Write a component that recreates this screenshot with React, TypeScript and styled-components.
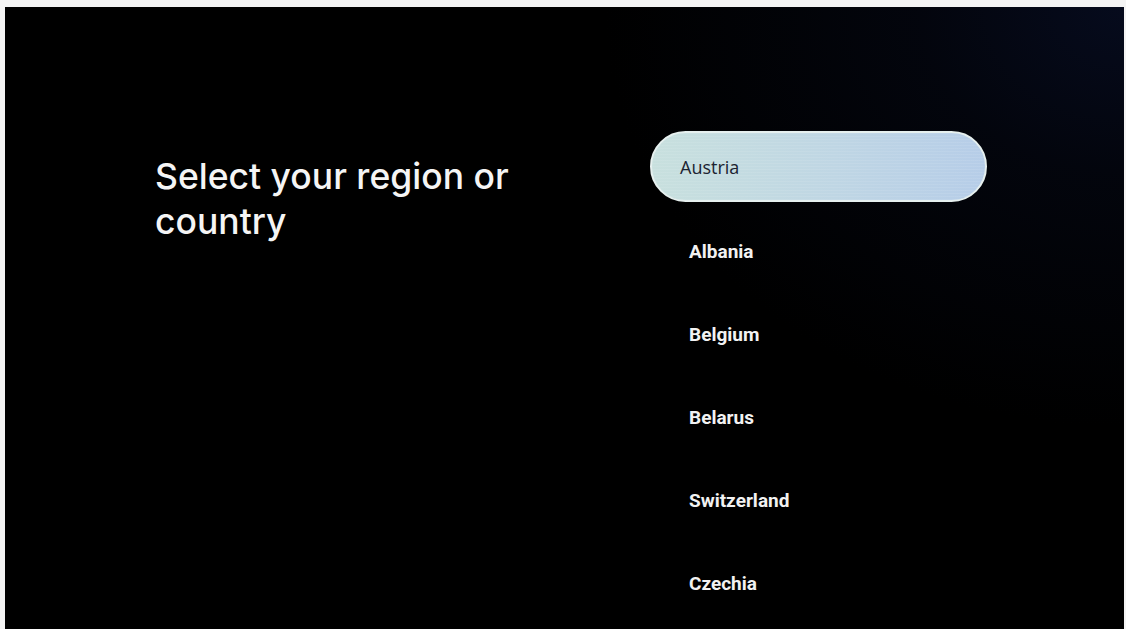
import styled, { createGlobalStyle } from "styled-components";

const GlobalStyle = createGlobalStyle`
    html, body {
        margin: 0;
        padding: 0;
        background: #f4f4f4;
    }
    body {
        width: 1126px;
        height: 629px;
        overflow: hidden;
    }
`;

const countries = ["Albania", "Belgium", "Belarus", "Switzerland", "Czechia"];

export default function App() {
    return (
        <>
            <GlobalStyle />
            <Screen>
                <Heading>Select your region or country</Heading>
                <List>
                    <FocusedItem>Austria</FocusedItem>
                    {countries.map((name) => (
                        <Item key={name}>{name}</Item>
                    ))}
                </List>
            </Screen>
        </>
    );
}

const Screen = styled.div`
    margin: 7px 2px 0 5px;
    height: 626px;
    box-sizing: border-box;
    padding: 124px 0 0 150px;
    display: grid;
    grid-template-columns: 495px 337px;
    align-items: start;
    background:
        radial-gradient(ellipse 520px 420px at 100% 0%, #060b1d 0%, rgba(4, 7, 18, 0.7) 40%, rgba(0, 0, 0, 0) 100%),
        #000;
    overflow: hidden;
`;

const Heading = styled.h1`
    margin: 23px 0 0;
    width: 420px;
    font-family: "Inter", "Lato", sans-serif;
    font-weight: 500;
    font-size: 35.5px;
    line-height: 45px;
    letter-spacing: 0;
    color: #f5f5f5;
`;

const List = styled.div`
    display: flex;
    flex-direction: column;
`;

const FocusedItem = styled.div`
    height: 71px;
    box-sizing: border-box;
    padding-left: 28px;
    display: flex;
    align-items: center;
    border-radius: 36px;
    border: 2px solid #e6f0ef;
    background:
        repeating-linear-gradient(0deg, rgba(255, 255, 255, 0.08) 0 1px, rgba(0, 0, 0, 0) 1px 3px),
        linear-gradient(90deg, #c8e0de 0%, #bfd6e4 55%, #b6cde8 100%);
    font-family: "Open Sans", "Liberation Sans", sans-serif;
    font-size: 18px;
    color: #1c2331;
    margin-bottom: 8px;
`;

const Item = styled.div`
    height: 83px;
    padding-left: 39px;
    display: flex;
    align-items: center;
    font-family: "Roboto", "Liberation Sans", sans-serif;
    font-weight: 700;
    font-size: 19px;
    color: #f2f2f2;
`;
